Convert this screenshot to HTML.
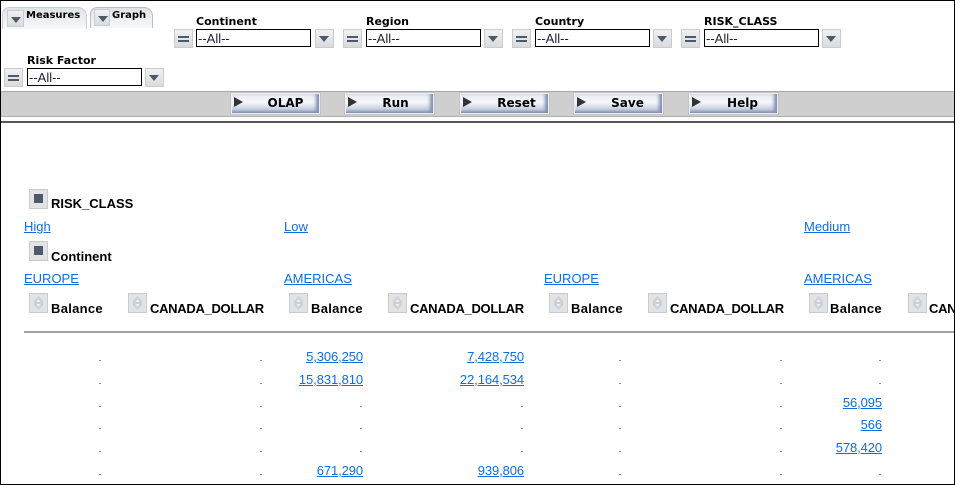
<!DOCTYPE html>
<html><head><meta charset="utf-8"><style>
html,body{margin:0;padding:0;background:#fff}
#p{position:relative;width:955px;height:485px;overflow:hidden;background:#fff;font-family:"Liberation Sans",sans-serif}
#p div,#p a,#p svg{position:absolute}
.l{font:bold 11px/13px "DejaVu Sans",sans-serif;color:#000;white-space:nowrap}
.sel{height:16px;border:1px solid #000;background:#fff;font:13px/17px "Liberation Sans",sans-serif;color:#223;padding-left:1px;box-sizing:content-box;width:112px}
.ib{width:19px;height:19px;background:linear-gradient(#f0f1f2,#d9dbdd);border:1px solid #cccccc;box-sizing:border-box}
.eq::before,.eq::after{content:"";position:absolute;left:3px;width:11px;height:2px;background:#4d5a6c}
.eq::before{top:6px}.eq::after{top:10px}
.dn::after{content:"";position:absolute;left:3px;top:6px;border-left:5.5px solid transparent;border-right:5.5px solid transparent;border-top:6px solid #4d5a6c}
.btn{width:89px;height:21px;top:93px;box-sizing:border-box;border:1px solid #eef0f5;background:linear-gradient(#e9ecf4 0,#f5f6fa 45%,#c6cedf 80%,#7f8fb3 100%);box-shadow:inset -4px 0 3px -1px #7f90b2;font:bold 12px/18px "DejaVu Sans",sans-serif;color:#000;text-align:center;outline:1px solid #c4c4c4}
.btn::before{content:"";position:absolute;left:2px;top:3px;border-top:5px solid transparent;border-bottom:5px solid transparent;border-left:9px solid #333}
a,.a{color:#0f6fe0;text-decoration:underline;font-size:13px;line-height:14px;white-space:nowrap}
.h{font:bold 13px/15px "Liberation Sans",sans-serif;color:#000;white-space:nowrap}
.b{letter-spacing:.3px}
.c{letter-spacing:-.3px}
.k{width:19px;height:20px;box-sizing:border-box;background:#e2e3e5;border:1px solid #cbcbcb}
.sq::after{content:"";position:absolute;left:4px;top:4px;width:9px;height:9px;background:#4d5a6c}
.n{text-align:right;width:90px;letter-spacing:-.1px}
.d{width:2px;height:1px;background:#888}
</style></head><body><div id="p">

<div style="left:0;top:0;width:955px;height:1px;background:#000"></div>
<div style="left:0;top:0;width:1px;height:485px;background:#000"></div>
<div style="left:954px;top:0;width:1px;height:485px;background:#000"></div>
<div style="left:0;top:484px;width:955px;height:1px;background:#000"></div>

<!-- tabs -->
<div style="left:2px;top:7px;width:85px;height:22px;box-sizing:border-box;border:1px solid #c9ced4;border-bottom:0;border-radius:7px 9px 0 0;background:linear-gradient(#dfe3e9,#f8f9fa)"></div>
<div style="left:90px;top:7px;width:63px;height:21px;box-sizing:border-box;border:1px solid #b9bec4;border-bottom:0;border-radius:7px 9px 0 0;background:linear-gradient(#dfe3e9,#f8f9fa)"></div>
<div class="ib dn" style="left:7px;top:10px;width:17px;height:17px"></div>
<div class="ib dn" style="left:94px;top:9px;width:16px;height:17px"></div>
<div class="l" style="left:26px;top:9px;font-size:10px">Measures</div>
<div class="l" style="left:112px;top:9px;font-size:10px">Graph</div>

<!-- filters -->
<div class="l" style="left:196px;top:15px">Continent</div>
<div class="ib eq" style="left:174px;top:29px"></div>
<div class="sel" style="left:196px;top:29px">--All--</div>
<div class="ib dn" style="left:315px;top:29px"></div>

<div class="l" style="left:366px;top:15px">Region</div>
<div class="ib eq" style="left:343px;top:29px"></div>
<div class="sel" style="left:366px;top:29px">--All--</div>
<div class="ib dn" style="left:484px;top:29px"></div>

<div class="l" style="left:535px;top:15px">Country</div>
<div class="ib eq" style="left:512px;top:29px"></div>
<div class="sel" style="left:535px;top:29px">--All--</div>
<div class="ib dn" style="left:653px;top:29px"></div>

<div class="l" style="left:704px;top:15px">RISK_CLASS</div>
<div class="ib eq" style="left:681px;top:29px"></div>
<div class="sel" style="left:704px;top:29px">--All--</div>
<div class="ib dn" style="left:822px;top:29px"></div>

<div class="l" style="left:27px;top:54px">Risk Factor</div>
<div class="ib eq" style="left:4px;top:68px"></div>
<div class="sel" style="left:27px;top:68px">--All--</div>
<div class="ib dn" style="left:145px;top:68px"></div>

<!-- toolbar -->
<div style="left:1px;top:91px;width:953px;height:26px;background:#cfcfcf;border-top:1px solid #a8a8a8;border-bottom:1px solid #b0b0b0;box-sizing:border-box"></div>
<div style="left:1px;top:121px;width:953px;height:2px;background:#555"></div>
<div class="btn" style="left:231px;text-indent:20px">OLAP</div>
<div class="btn" style="left:345px;text-indent:12px">Run</div>
<div class="btn" style="left:460px;text-indent:24px">Reset</div>
<div class="btn" style="left:574px;text-indent:18px">Save</div>
<div class="btn" style="left:689px;text-indent:18px">Help</div>

<!-- pivot headers -->
<div class="k sq" style="left:29px;top:189px"></div>
<div class="h" style="left:51px;top:196px">RISK_CLASS</div>
<a style="left:24px;top:220px">High</a>
<a style="left:284px;top:220px">Low</a>
<a style="left:804px;top:220px">Medium</a>
<div class="k sq" style="left:29px;top:241px"></div>
<div class="h" style="left:51px;top:249px">Continent</div>
<a style="left:24px;top:272px">EUROPE</a>
<a style="left:284px;top:272px">AMERICAS</a>
<a style="left:544px;top:272px">EUROPE</a>
<a style="left:804px;top:272px">AMERICAS</a>

<div class="k" style="left:29px;top:293px"><svg style="left:3px;top:1px" width="11" height="16" viewBox="0 0 11 16"><path d="M5.5 1L10 6V10L5.5 15L1 10V6Z" fill="#c9d1d9"/><path d="M5.5 4L7.5 7H3.5ZM5.5 12L7.5 9H3.5Z" fill="#eef1f3"/></svg></div><div class="h b" style="left:51px;top:301px">Balance</div>
<div class="k" style="left:128px;top:293px"><svg style="left:3px;top:1px" width="11" height="16" viewBox="0 0 11 16"><path d="M5.5 1L10 6V10L5.5 15L1 10V6Z" fill="#c9d1d9"/><path d="M5.5 4L7.5 7H3.5ZM5.5 12L7.5 9H3.5Z" fill="#eef1f3"/></svg></div><div class="h c" style="left:150px;top:301px">CANADA_DOLLAR</div>
<div class="k" style="left:289px;top:293px"><svg style="left:3px;top:1px" width="11" height="16" viewBox="0 0 11 16"><path d="M5.5 1L10 6V10L5.5 15L1 10V6Z" fill="#c9d1d9"/><path d="M5.5 4L7.5 7H3.5ZM5.5 12L7.5 9H3.5Z" fill="#eef1f3"/></svg></div><div class="h b" style="left:311px;top:301px">Balance</div>
<div class="k" style="left:388px;top:293px"><svg style="left:3px;top:1px" width="11" height="16" viewBox="0 0 11 16"><path d="M5.5 1L10 6V10L5.5 15L1 10V6Z" fill="#c9d1d9"/><path d="M5.5 4L7.5 7H3.5ZM5.5 12L7.5 9H3.5Z" fill="#eef1f3"/></svg></div><div class="h c" style="left:410px;top:301px">CANADA_DOLLAR</div>
<div class="k" style="left:549px;top:293px"><svg style="left:3px;top:1px" width="11" height="16" viewBox="0 0 11 16"><path d="M5.5 1L10 6V10L5.5 15L1 10V6Z" fill="#c9d1d9"/><path d="M5.5 4L7.5 7H3.5ZM5.5 12L7.5 9H3.5Z" fill="#eef1f3"/></svg></div><div class="h b" style="left:571px;top:301px">Balance</div>
<div class="k" style="left:648px;top:293px"><svg style="left:3px;top:1px" width="11" height="16" viewBox="0 0 11 16"><path d="M5.5 1L10 6V10L5.5 15L1 10V6Z" fill="#c9d1d9"/><path d="M5.5 4L7.5 7H3.5ZM5.5 12L7.5 9H3.5Z" fill="#eef1f3"/></svg></div><div class="h c" style="left:670px;top:301px">CANADA_DOLLAR</div>
<div class="k" style="left:809px;top:293px"><svg style="left:3px;top:1px" width="11" height="16" viewBox="0 0 11 16"><path d="M5.5 1L10 6V10L5.5 15L1 10V6Z" fill="#c9d1d9"/><path d="M5.5 4L7.5 7H3.5ZM5.5 12L7.5 9H3.5Z" fill="#eef1f3"/></svg></div><div class="h b" style="left:830px;top:301px">Balance</div>
<div class="k" style="left:908px;top:293px"><svg style="left:3px;top:1px" width="11" height="16" viewBox="0 0 11 16"><path d="M5.5 1L10 6V10L5.5 15L1 10V6Z" fill="#c9d1d9"/><path d="M5.5 4L7.5 7H3.5ZM5.5 12L7.5 9H3.5Z" fill="#eef1f3"/></svg></div><div class="h c" style="left:929px;top:301px;width:25px;overflow:hidden">CANADA_DOLLAR</div>

<div style="left:24px;top:331px;width:930px;height:2px;background:#a3a3a3"></div>

<!-- values -->
<a class="n" style="left:273px;top:350px">5,306,250</a>
<a class="n" style="left:434px;top:350px">7,428,750</a>
<a class="n" style="left:273px;top:373px">15,831,810</a>
<a class="n" style="left:434px;top:373px">22,164,534</a>
<a class="n" style="left:792px;top:396px">56,095</a>
<a class="n" style="left:792px;top:418px">566</a>
<a class="n" style="left:792px;top:441px">578,420</a>
<a class="n" style="left:273px;top:464px">671,290</a>
<a class="n" style="left:434px;top:464px">939,806</a>

<!-- dots row 1 -->
<div class="d" style="left:99px;top:360px"></div><div class="d" style="left:260px;top:360px"></div><div class="d" style="left:619px;top:360px"></div><div class="d" style="left:780px;top:360px"></div><div class="d" style="left:879px;top:360px"></div>
<!-- row 2 -->
<div class="d" style="left:99px;top:383px"></div><div class="d" style="left:260px;top:383px"></div><div class="d" style="left:619px;top:383px"></div><div class="d" style="left:780px;top:383px"></div><div class="d" style="left:879px;top:383px"></div>
<!-- row 3 -->
<div class="d" style="left:99px;top:406px"></div><div class="d" style="left:260px;top:406px"></div><div class="d" style="left:360px;top:406px"></div><div class="d" style="left:521px;top:406px"></div><div class="d" style="left:619px;top:406px"></div><div class="d" style="left:780px;top:406px"></div>
<!-- row 4 -->
<div class="d" style="left:99px;top:428px"></div><div class="d" style="left:260px;top:428px"></div><div class="d" style="left:360px;top:428px"></div><div class="d" style="left:521px;top:428px"></div><div class="d" style="left:619px;top:428px"></div><div class="d" style="left:780px;top:428px"></div>
<!-- row 5 -->
<div class="d" style="left:99px;top:451px"></div><div class="d" style="left:260px;top:451px"></div><div class="d" style="left:360px;top:451px"></div><div class="d" style="left:521px;top:451px"></div><div class="d" style="left:619px;top:451px"></div><div class="d" style="left:780px;top:451px"></div>
<!-- row 6 -->
<div class="d" style="left:99px;top:474px"></div><div class="d" style="left:260px;top:474px"></div><div class="d" style="left:619px;top:474px"></div><div class="d" style="left:780px;top:474px"></div><div class="d" style="left:879px;top:474px"></div>

</div></body></html>
